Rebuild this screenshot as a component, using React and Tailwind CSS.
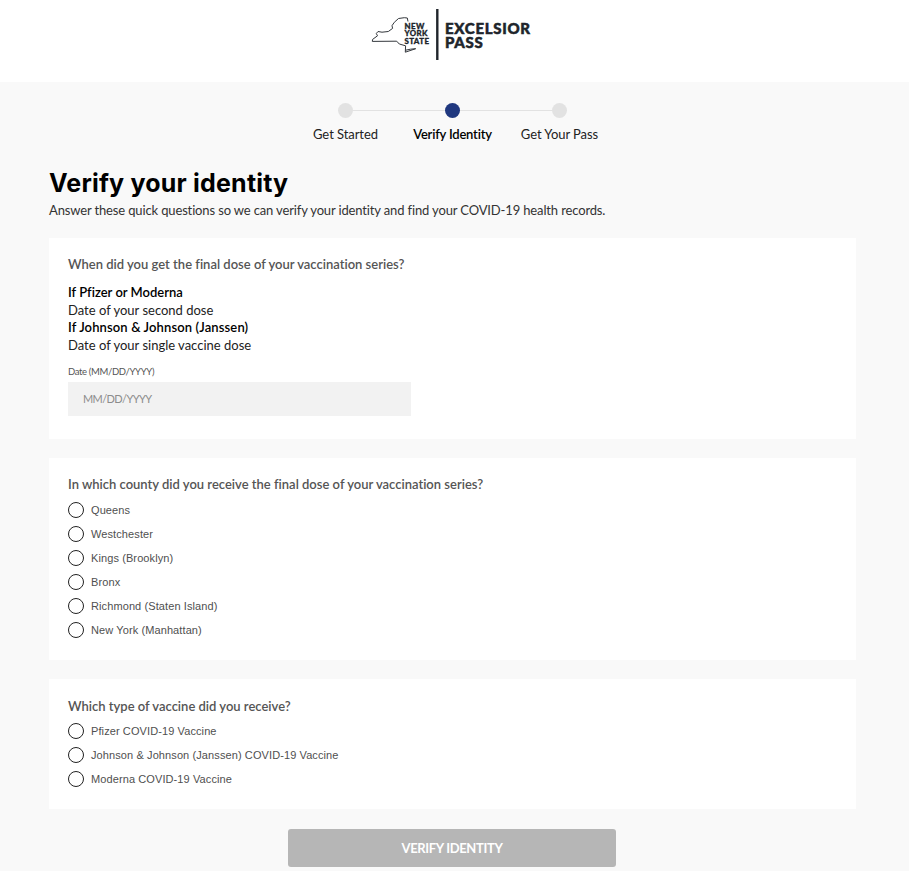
import React, { useState } from 'react';
import clsx from 'clsx';

const steps = ['Get Started', 'Verify Identity', 'Get Your Pass'];

const counties = ['Queens', 'Westchester', 'Kings (Brooklyn)', 'Bronx', 'Richmond (Staten Island)', 'New York (Manhattan)'];

const vaccines = ['Pfizer COVID-19 Vaccine', 'Johnson & Johnson (Janssen) COVID-19 Vaccine', 'Moderna COVID-19 Vaccine'];

const Logo = () => (
  <svg width="162" height="54" viewBox="370 8 162 54" fill="none">
    {/* state outline */}
    <path
      d="M408 21.5 L407.3 18 L404.3 17.7 L398.5 18.5 L394.3 22.3 L392 25.7 L392.6 28.4 L388.3 31.5 L382 32.2 L378 31.5 L376.3 33.5 L377.5 35.8 L372.6 39.4 L372.3 41.4 L396.7 41.2 L399.3 44 L405.6 45.8 L405.3 52.2 L415.7 48.7 L410.5 49.2 L405.6 50.2"
      stroke="#33373c"
      strokeWidth="1"
      strokeLinejoin="round"
    />
    <text fill="#20252b" stroke="#20252b" strokeWidth="0.3" fontFamily="Lato, sans-serif" fontWeight="900" fontSize="7.9" letterSpacing="0.4">
      <tspan x="404.5" y="28.9">NEW</tspan>
      <tspan x="404.5" y="36.4">YORK</tspan>
      <tspan x="404.5" y="44">STATE</tspan>
    </text>
    <path d="M437.3 9v51" stroke="#20252b" strokeWidth="2.4" />
    <text fill="#20252b" stroke="#20252b" strokeWidth="0.5" fontFamily="Lato, sans-serif" fontWeight="900" fontSize="15" letterSpacing="0.7">
      <tspan x="445" y="33.9">EXCELSIOR</tspan>
      <tspan x="445" y="48.4">PASS</tspan>
    </text>
  </svg>
);

const Stepper = ({ current }) => (
  <ol className="mx-auto grid w-[321px] grid-cols-3 pt-[21px]">
    {steps.map((step, i) => (
      <li key={step} className="flex flex-col items-center">
        <div className="flex w-full items-center">
          <span className={clsx('h-px flex-1', i > 0 && 'bg-[#e2e2e2]')} />
          <span className={clsx('size-[15px] rounded-full', i === current ? 'bg-[#20387f]' : 'bg-[#e2e2e2]')} />
          <span className={clsx('h-px flex-1', i < steps.length - 1 && 'bg-[#e2e2e2]')} />
        </div>
        <span
          className={clsx(
            'mt-[6px] text-[13px] leading-[20px] whitespace-nowrap',
            i === current ? 'font-semibold tracking-[-0.2px] text-black' : 'tracking-[-0.06px] text-[#222]'
          )}
        >
          {step}
        </span>
      </li>
    ))}
  </ol>
);

const Question = ({ children }) => (
  <h2 className="text-[13px] leading-[20px] font-semibold text-[#555]">{children}</h2>
);

const RadioList = ({ name, options }) => {
  const [selected, setSelected] = useState(null);

  return (
    <div className="flex flex-col gap-2">
      {options.map(o => (
        <label key={o} className="flex h-4 cursor-pointer items-center gap-[7px]">
          <input
            type="radio"
            name={name}
            checked={selected === o}
            onChange={() => setSelected(o)}
            className="size-4 appearance-none rounded-full border border-[#222] bg-white checked:border-4 checked:border-[#20387f]"
          />
          <span className="font-['Liberation_Sans',sans-serif] text-[11px] leading-4 tracking-[0.1px] text-[#4f4f4f]">{o}</span>
        </label>
      ))}
    </div>
  );
};

export default function App() {
  const [date, setDate] = useState('');

  return (
    <div className="h-[871px] overflow-hidden bg-[#f9f9f9] font-['Lato',sans-serif] [font-variant-ligatures:none]">
      <header className="flex h-[82px] justify-start bg-white pt-2 pl-[370px]">
        <Logo />
      </header>

      <main className="ml-[49px] w-[807px]">
        <Stepper current={1} />

        <h1 className="mt-[22px] font-['Inter',sans-serif] text-[25px] leading-[34px] font-bold tracking-[0.2px] text-black">Verify your identity</h1>
        <p className="text-[13px] leading-[20px] tracking-[-0.14px] text-[#333]">
          Answer these quick questions so we can verify your identity and find your COVID-19 health records.
        </p>

        <section className="mt-[18px] h-[201px] bg-white px-[19px] pt-[16px]">
          <Question>When did you get the final dose of your vaccination series?</Question>
          <dl className="mt-[10px] text-[13px] leading-[17.6px] text-[#222]">
            <dt className="font-semibold text-black">If Pfizer or Moderna</dt>
            <dd>Date of your second dose</dd>
            <dt className="font-semibold tracking-[0.13px] text-black">If Johnson &amp; Johnson (Janssen)</dt>
            <dd>Date of your single vaccine dose</dd>
          </dl>
          <label className="mt-[10px] block text-[9.5px] leading-[16px] tracking-[-0.35px] text-[#555]" htmlFor="dose-date">
            <span>Date (MM/DD/YYYY)</span>
          </label>
          <input
            id="dose-date"
            value={date}
            onChange={e => setDate(e.target.value)}
            placeholder="MM/DD/YYYY"
            className="mt-[2px] block h-[34px] w-[343px] bg-[#f2f2f2] px-[15px] pb-[2px] text-[11px] tracking-[-0.6px] text-[#333] outline-none placeholder:text-[#8c8c8c]"
          />
        </section>

        <section className="mt-[19px] h-[202px] bg-white px-[19px] pt-[16px]">
          <Question>In which county did you receive the final dose of your vaccination series?</Question>
          <div className="mt-2">
            <RadioList name="county" options={counties} />
          </div>
        </section>

        <section className="mt-[19px] h-[130px] bg-white px-[19px] pt-[17px]">
          <Question>Which type of vaccine did you receive?</Question>
          <div className="mt-[7px]">
            <RadioList name="vaccine" options={vaccines} />
          </div>
        </section>

        <button className="mt-5 ml-[239px] block h-[38px] w-[328px] rounded-[3px] bg-[#b6b6b6] pt-[2px] text-[13px] font-bold tracking-[-0.35px] text-white">
          VERIFY IDENTITY
        </button>
      </main>
    </div>
  );
}
